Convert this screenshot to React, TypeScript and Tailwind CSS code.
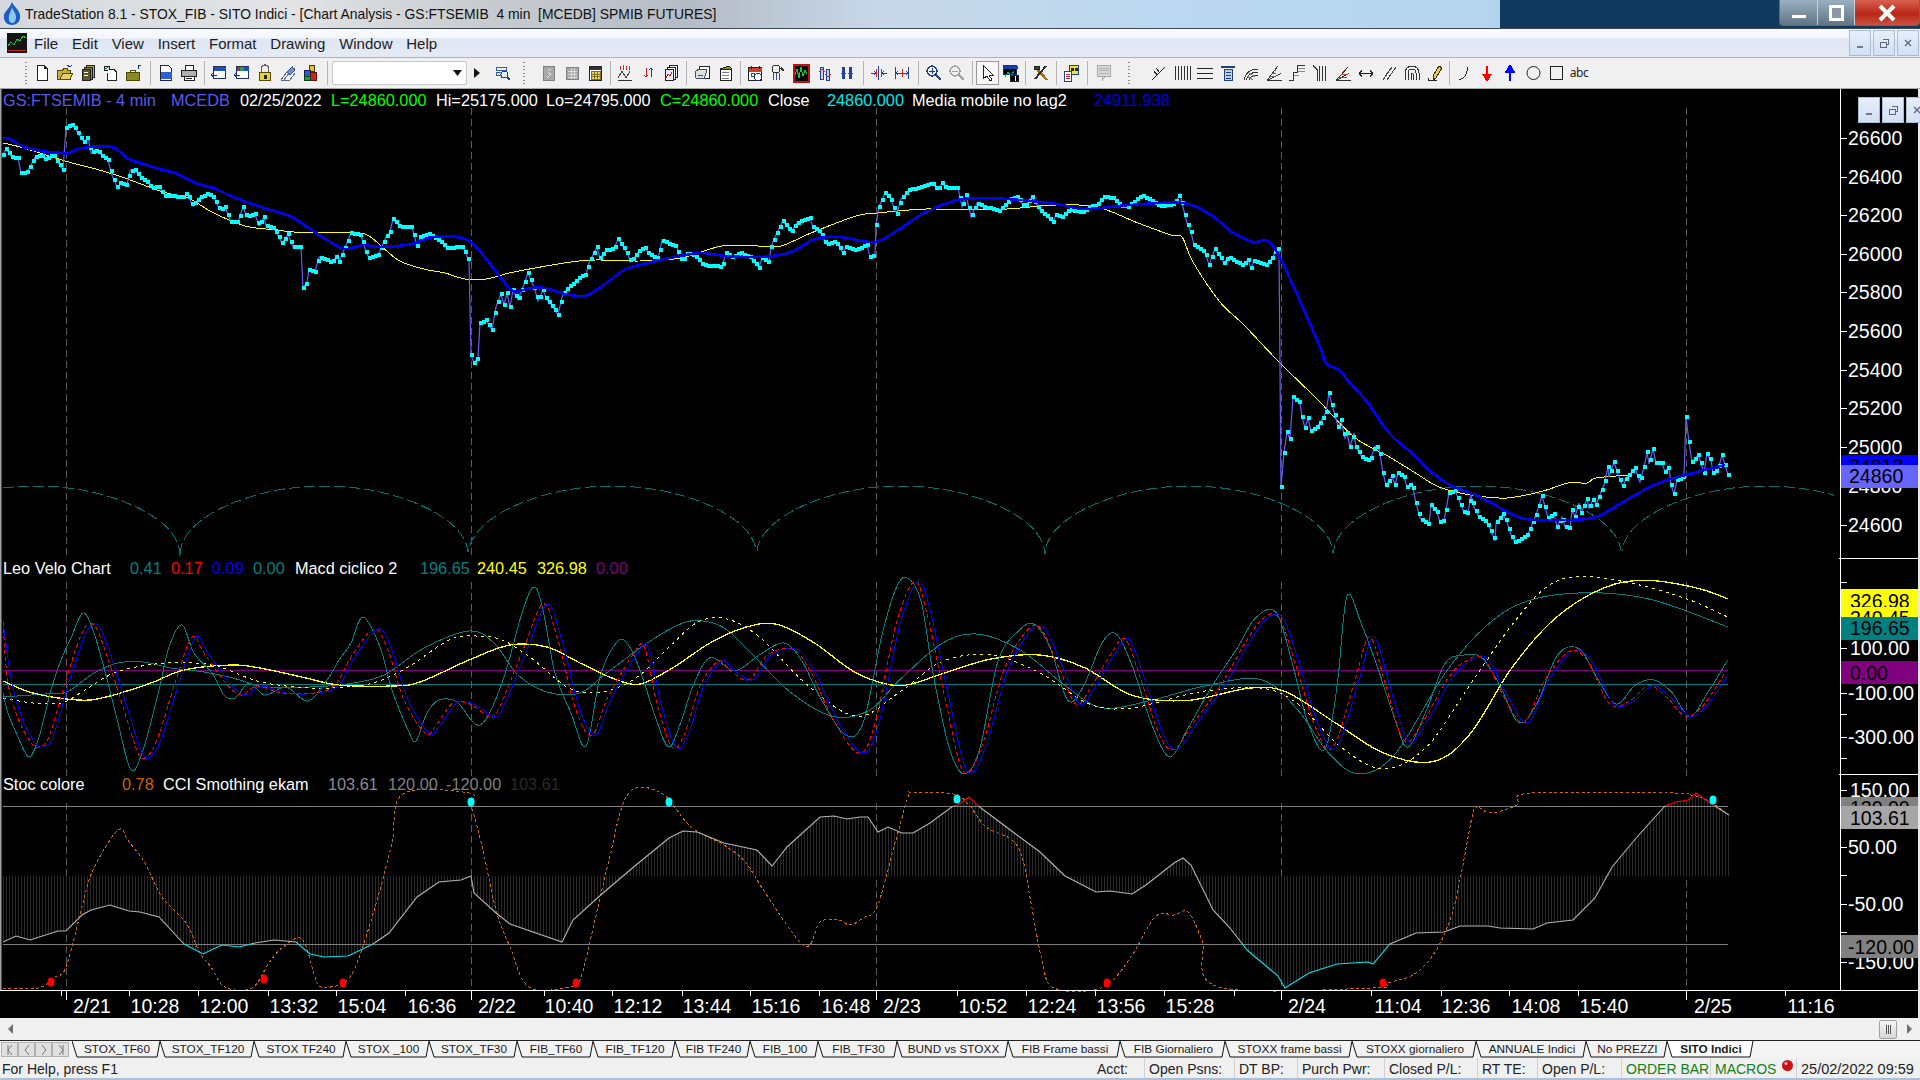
import React from 'react';

type P = [number, number];
const K = 1920 / 1568;
const th = (a: number[][]): P[] => a.map(([x, y]) => [x * K, y * K] as P);
const toD = (pts: P[]) => 'M' + pts.map(([x, y]) => `${x.toFixed(1)} ${y.toFixed(1)}`).join('L');

// catmull-rom through the points, keeps the peaks where they were read off
const curve = (pts: P[]) => {
    let d = `M${pts[0][0].toFixed(1)} ${pts[0][1].toFixed(1)}`;
    for (let i = 0; i < pts.length - 1; i++) {
        const p0 = pts[Math.max(0, i - 1)];
        const p1 = pts[i];
        const p2 = pts[i + 1];
        const p3 = pts[Math.min(pts.length - 1, i + 2)];
        const c1x = p1[0] + (p2[0] - p0[0]) / 6;
        const c1y = p1[1] + (p2[1] - p0[1]) / 6;
        const c2x = p2[0] - (p3[0] - p1[0]) / 6;
        const c2y = p2[1] - (p3[1] - p1[1]) / 6;
        d += `C${c1x.toFixed(1)} ${c1y.toFixed(1)} ${c2x.toFixed(1)} ${c2y.toFixed(1)} ${p2[0].toFixed(1)} ${p2[1].toFixed(1)}`;
    }
    return d;
};

const yAt = (pts: P[], x: number) => {
    for (let i = 1; i < pts.length; i++) {
        if (x <= pts[i][0]) {
            const [x0, y0] = pts[i - 1];
            const [x1, y1] = pts[i];
            return x1 === x0 ? y1 : y0 + ((y1 - y0) * (x - x0)) / (x1 - x0);
        }
    }
    return pts[pts.length - 1][1];
};

const price: P[] = [[3,155],[6,149],[12,157],[18,158],[21,173],[27,172],[31,165],[35,157],[41,155],[45,159],[53,155],[58,162],[63,170],[66,128],[73,124],[78,133],[84,142],[88,137],[91,153],[98,150],[102,156],[108,160],[112,175],[118,189],[120,183],[127,185],[130,171],[135,170],[141,178],[149,183],[151,188],[159,187],[165,196],[184,197],[187,193],[193,206],[200,197],[208,194],[214,198],[220,210],[225,207],[231,222],[238,222],[243,207],[247,217],[255,214],[259,226],[264,217],[266,226],[274,228],[282,243],[288,234],[293,247],[301,247],[303,288],[307,282],[309,270],[315,272],[319,257],[328,260],[331,263],[338,255],[339,262],[347,243],[351,233],[361,235],[366,252],[369,258],[378,255],[386,237],[390,232],[393,219],[400,227],[412,227],[417,246],[420,237],[429,234],[441,242],[447,248],[463,247],[469,261],[471,355],[474,363],[478,357],[480,323],[486,320],[492,330],[496,307],[501,294],[504,305],[507,293],[510,307],[513,290],[518,300],[522,290],[528,273],[535,290],[538,301],[543,290],[547,300],[553,307],[558,315],[562,297],[565,291],[580,277],[586,275],[589,263],[597,247],[600,258],[606,250],[614,249],[618,239],[627,253],[631,262],[640,250],[646,248],[648,253],[658,259],[662,240],[671,245],[677,246],[679,257],[683,260],[688,253],[697,257],[703,265],[722,267],[726,253],[732,257],[740,253],[750,257],[759,268],[762,258],[769,263],[771,247],[775,237],[783,221],[791,232],[797,223],[810,218],[813,227],[818,230],[822,235],[826,244],[836,242],[843,253],[846,247],[856,250],[867,245],[870,257],[875,255],[876,225],[879,207],[885,193],[890,198],[895,210],[897,214],[901,199],[909,190],[922,187],[932,183],[938,190],[942,183],[946,188],[958,188],[962,207],[966,195],[971,217],[977,203],[985,207],[999,211],[1011,199],[1018,197],[1024,207],[1032,197],[1040,210],[1053,222],[1056,215],[1062,217],[1069,210],[1083,212],[1089,207],[1097,205],[1104,197],[1113,198],[1120,205],[1128,207],[1142,195],[1150,200],[1162,207],[1175,203],[1180,194],[1183,207],[1187,223],[1191,232],[1194,245],[1205,252],[1209,265],[1215,249],[1224,263],[1228,257],[1242,265],[1248,260],[1251,268],[1254,261],[1266,265],[1273,257],[1276,249],[1279,249],[1281,487],[1284,453],[1287,432],[1290,439],[1293,397],[1300,403],[1302,417],[1305,428],[1308,418],[1311,431],[1317,427],[1323,418],[1326,412],[1329,393],[1332,405],[1335,415],[1338,427],[1341,420],[1345,438],[1347,433],[1350,447],[1354,433],[1356,447],[1362,457],[1370,461],[1375,446],[1379,448],[1383,473],[1386,485],[1392,476],[1395,485],[1398,473],[1404,477],[1407,487],[1412,483],[1416,503],[1420,518],[1429,525],[1431,505],[1437,512],[1440,522],[1444,521],[1449,493],[1455,490],[1461,505],[1464,512],[1468,513],[1471,495],[1474,507],[1479,517],[1486,522],[1490,528],[1495,541],[1496,523],[1503,514],[1507,522],[1511,535],[1515,542],[1521,539],[1528,534],[1536,515],[1542,496],[1546,510],[1548,518],[1554,514],[1557,527],[1562,517],[1565,527],[1570,528],[1572,510],[1575,517],[1579,503],[1581,513],[1587,499],[1589,508],[1594,498],[1596,505],[1599,497],[1604,485],[1608,467],[1609,477],[1614,462],[1620,480],[1623,486],[1627,477],[1635,468],[1640,482],[1645,463],[1647,452],[1649,464],[1653,449],[1656,463],[1662,463],[1665,472],[1669,466],[1671,485],[1674,494],[1677,480],[1682,478],[1684,475],[1686,417],[1689,442],[1692,462],[1698,455],[1701,463],[1704,473],[1707,454],[1711,460],[1713,473],[1718,470],[1722,455],[1725,465],[1728,475]];

const maBlue: P[] = [[3,138],[10,139],[24,147],[41,151],[61,153],[69,153],[82,148],[112,147],[127,158],[143,164],[163,170],[175,173],[196,183],[216,189],[233,197],[261,207],[290,216],[300,222],[327,240],[345,249],[363,245],[380,247],[412,244],[433,237],[469,241],[500,277],[513,291],[531,288],[545,288],[565,294],[584,296],[598,289],[624,270],[640,265],[660,260],[681,256],[701,253],[726,256],[762,257],[791,252],[815,239],[840,237],[875,242],[901,228],[926,212],[962,199],[1007,199],[1056,204],[1085,209],[1130,205],[1183,203],[1211,215],[1232,232],[1252,242],[1275,249],[1317,340],[1326,363],[1339,370],[1350,383],[1368,403],[1389,433],[1414,455],[1429,470],[1450,485],[1482,498],[1521,518],[1554,520],[1593,518],[1618,505],[1654,485],[1682,476],[1725,465]];

const maYellow: P[] = [[3,143],[24,148],[65,161],[92,168],[122,177],[163,192],[188,198],[212,212],[245,226],[278,230],[294,232],[351,233],[369,236],[398,260],[424,269],[445,273],[465,279],[486,279],[514,272],[571,262],[596,260],[640,261],[681,258],[722,246],[758,246],[781,246],[811,233],[856,216],[877,213],[926,209],[962,210],[1007,209],[1056,205],[1097,207],[1138,223],[1171,235],[1182,237],[1193,262],[1220,302],[1244,325],[1279,362],[1318,400],[1354,437],[1386,455],[1414,472],[1439,487],[1471,495],[1507,498],[1543,491],[1568,483],[1587,483],[1596,478],[1629,475]];

const fastTeal: P[] = [[3,693],[8,713],[18,737],[29,757],[39,737],[51,690],[61,660],[71,638],[83,613],[94,633],[108,683],[118,723],[131,770],[143,750],[159,690],[169,647],[182,625],[194,653],[212,673],[224,695],[235,698],[249,683],[265,695],[286,687],[308,701],[327,680],[339,660],[351,643],[363,617],[380,647],[392,690],[408,730],[416,741],[427,713],[439,700],[457,702],[480,725],[502,683],[522,613],[534,587],[543,610],[555,673],[571,713],[586,746],[600,677],[616,643],[627,643],[640,670],
    ...th([[535,585],[546,610],[556,590],[566,560],[580,537],[600,548],[620,535],[640,525],[655,540],[670,570],[690,600],[705,590],[720,520],[732,480],[741,472],[752,490],[762,550],[775,610],[787,632],[800,612],[815,540],[832,515],[845,510],[858,530],[872,572],[885,560],[900,525],[912,518],[925,545],[940,590],[955,618],[970,595],[990,560],[1010,530],[1025,505],[1042,500],[1055,540],[1068,590],[1082,612],[1092,560],[1100,487],[1112,510],[1125,545],[1140,590],[1150,610],[1165,580],[1180,542],[1195,535],[1210,537],[1225,560],[1240,590],[1255,575],[1272,535],[1290,530],[1305,555],[1320,575],[1335,560],[1350,555],[1365,565],[1380,585],[1395,565],[1411,539]])];

const fastBlue: P[] = [[3,622],[12,683],[24,723],[37,745],[43,747],[53,737],[69,683],[86,633],[98,625],[110,653],[127,707],[141,750],[149,758],[161,740],[180,680],[196,637],[208,653],[229,682],[245,695],[261,686],[286,693],[318,693],[339,685],[355,657],[378,629],[392,650],[408,700],[429,733],[439,727],[457,703],[476,705],[492,716],[502,710],[527,650],[547,604],[561,637],[580,710],[596,735],[612,697],[640,650],
    ...th([[530,530],[540,575],[552,610],[562,600],[575,560],[590,540],[600,548],[615,555],[630,535],[650,530],[665,548],[685,590],[705,615],[718,590],[735,510],[750,475],[760,500],[775,570],[790,630],[805,610],[822,550],[838,520],[852,512],[868,545],[882,575],[895,560],[910,535],[922,522],[935,555],[950,600],[962,612],[978,590],[1000,560],[1020,525],[1035,505],[1048,505],[1062,545],[1078,595],[1092,610],[1110,555],[1122,520],[1135,560],[1150,605],[1165,590],[1185,555],[1200,540],[1215,538],[1232,570],[1248,590],[1265,555],[1285,532],[1300,540],[1318,575],[1335,572],[1350,560],[1365,570],[1380,585],[1395,575],[1411,551]])];
const fastRed: P[] = fastBlue.map(([x, y]) => [Math.max(3, x - 4), y] as P);

const slowTeal: P[] = [[3,697],[45,694],[67,692],[94,673],[118,663],[143,662],[171,668],[204,672],[233,678],[265,687],[310,687],[347,684],[384,675],[424,648],[469,631],[494,643],[518,675],[547,692],[580,693],[604,675],[640,648],
    ...th([[545,515],[565,507],[590,512],[615,535],[645,565],[680,585],[710,580],[735,555],[770,525],[800,518],[835,532],[870,560],[900,578],[940,572],[985,560],[1030,555],[1060,580],[1085,615],[1110,632],[1140,615],[1180,550],[1215,510],[1250,490],[1300,484],[1350,490],[1411,512]])];
const slowDash: P[] = [[3,698],[33,703],[61,703],[82,692],[114,673],[155,664],[192,663],[220,667],[261,682],[310,688],[347,687],[376,682],[408,667],[449,640],[476,636],[502,640],[531,658],[567,687],[592,693],[616,688],[640,675],
    ...th([[550,525],[570,508],[592,505],[620,520],[660,560],[700,585],[735,565],[770,540],[810,535],[850,550],[890,575],[925,578],[980,565],[1030,562],[1060,575],[1095,610],[1130,628],[1165,610],[1200,560],[1235,510],[1265,478],[1295,471],[1340,478],[1380,490],[1411,504]])];
const slowYellow: P[] = [[3,681],[33,693],[78,700],[106,697],[151,683],[184,670],[233,665],[265,669],[306,678],[339,685],[392,686],[420,682],[469,660],[510,645],[547,647],[580,663],[612,678],[640,684],
    ...th([[550,545],[580,525],[610,512],[635,510],[665,525],[700,550],[735,560],[770,550],[810,538],[850,535],[885,545],[925,568],[970,572],[1020,562],[1050,565],[1090,590],[1130,615],[1170,622],[1200,600],[1235,545],[1270,505],[1310,480],[1345,474],[1385,480],[1411,489]])];

const cci: P[] = [[3,942],[16,936],[30,940],[58,931],[66,931],[82,915],[91,910],[110,905],[129,911],[140,912],[159,917],[184,944],[203,954],[222,945],[239,947],[255,943],[274,940],[296,942],[310,954],[324,957],[348,956],[373,944],[389,933],[417,897],[439,882],[461,880],[471,876],[474,893],[496,913],[510,924],[562,942],[573,920],[603,893],[636,865],[669,838],[683,831],[697,832],[724,843],[757,850],[772,866],[787,847],[820,817],[834,816],[847,819],[860,817],[868,817],[878,832],[888,827],[902,833],[913,833],[930,823],[953,806],[958,805],[969,797],[981,808],[1017,835],[1040,852],[1065,876],[1096,892],[1110,891],[1132,894],[1146,885],[1174,863],[1183,858],[1191,865],[1213,910],[1230,928],[1247,950],[1278,976],[1285,988],[1309,973],[1337,964],[1368,962],[1373,964],[1390,944],[1416,933],[1444,932],[1460,926],[1488,926],[1500,928],[1533,929],[1547,923],[1573,920],[1595,898],[1612,867],[1637,837],[1665,806],[1676,802],[1688,800],[1696,793],[1710,803],[1729,815]];

const stoc: P[] = [[3,988],[38,988],[55,977],[66,967],[82,907],[93,870],[118,830],[129,842],[145,863],[162,897],[186,923],[200,953],[211,967],[225,987],[252,988],[269,963],[282,948],[302,939],[315,977],[321,987],[343,983],[357,963],[378,897],[392,843],[403,794],[469,793],[472,807],[483,850],[496,910],[510,947],[529,987],[570,987],[581,977],[595,920],[609,860],[628,794],[661,793],[691,827],[724,845],[746,863],[768,897],[805,946],[820,922],[839,920],[850,925],[863,918],[877,907],[894,847],[908,797],[913,793],[953,794],[969,805],[986,827],[1012,840],[1023,860],[1031,903],[1042,960],[1054,988],[1101,988],[1129,960],[1155,917],[1174,915],[1188,912],[1202,940],[1219,987],[1373,988],[1388,983],[1416,973],[1438,947],[1455,903],[1472,817],[1477,807],[1491,813],[1517,805],[1531,793],[1674,793],[1691,795],[1707,800],[1729,815]];

const squares = () => {
    let d = '';
    for (let x = 3; x <= 1728; x += 3) {
        const y = Math.round(yAt(price, x));
        d += `M${x - 1} ${y - 2}h4v4h-4z`;
    }
    return d;
};

const hist = () => {
    let d = '';
    for (let x = 3; x <= 1728; x += 3) d += `M${x} 876V${yAt(cci, x).toFixed(0)}`;
    return d;
};

const cycle = () => {
    const pts: P[] = [];
    for (let x = 3; x <= 1834; x += 1) {
        const s = Math.abs(Math.sin((Math.PI * (x - 180)) / 288.3));
        pts.push([x, 557 - 71 * Math.pow(s, 0.45)]);
    }
    return toD(pts);
};

const days = [66, 471, 876, 1281, 1686];
const timeLabels: [string, number][] = [['2/21',92],['10:28',155],['12:00',224],['13:32',294],['15:04',362],['16:36',432],['2/22',497],['10:40',569],['12:12',638],['13:44',707],['15:16',776],['16:48',846],['2/23',902],['10:52',983],['12:24',1052],['13:56',1121],['15:28',1190],['2/24',1307],['11:04',1398],['12:36',1466],['14:08',1536],['15:40',1604],['2/25',1713],['11:16',1811]];
const timeTicks = [61,129,198,268,336,405,544,612,682,750,819,957,1026,1095,1164,1234,1371,1441,1509,1578,1785];
const priceLabels: [string, number][] = [['26600',138],['26400',177],['26200',215],['26000',254],['25800',292],['25600',331],['25400',370],['25200',408],['25000',447],['24800',486],['24600',525]];
const axisLabels: [string, number, number][] = [['100.00',1850,648],['-100.00',1848,693],['-300.00',1848,737],['150.00',1850,790],['50.00',1848,847],['-50.00',1848,904],['-150.00',1848,962]];
const axisTicks = [582,648,693,714,737,758,790,847,875,904,932,962];

const legends: [string, number, number, string][] = [
    ['GS:FTSEMIB - 4 min',3,100,'#5a5af0'],['MCEDB',171,100,'#5a5af0'],['02/25/2022',240,100,'#fff'],['L=24860.000',331,100,'#00ff00'],['Hi=25175.000',436,100,'#fff'],['Lo=24795.000',546,100,'#fff'],['C=24860.000',660,100,'#00ff00'],['Close',768,100,'#fff'],['24860.000',827,100,'#00e8f0'],['Media mobile no lag2',912,100,'#fff'],['24911.938',1094,100,'#0000e0'],
    ['Leo Velo Chart',3,568,'#fff'],['0.41',130,568,'#008080'],['0.17',171,568,'#ff0000'],['0.09',212,568,'#0000ff'],['0.00',253,568,'#008080'],['Macd ciclico 2',295,568,'#fff'],['196.65',420,568,'#008080'],['240.45',477,568,'#ffff00'],['326.98',537,568,'#ffff00'],['0.00',596,568,'#800080'],
    ['Stoc colore',3,784,'#fff'],['0.78',122,784,'#c86400'],['CCI Smothing ekam',163,784,'#fff'],['103.61',328,784,'#8a8a9a'],['120.00',388,784,'#808080'],['-120.00',446,784,'#808080'],['103.61',510,784,'#2a2a2a'],
];

const redDots: P[] = [[51,982],[264,979],[343,983],[576,983],[1107,983],[1383,983]];
const cyanDots: P[] = [[471,802],[669,802],[957,799],[1713,800]];

const ChartPlot = () => (
    <svg width={1920} height={929} viewBox="0 89 1920 929" className="block font-['Liberation_Sans',Arial,sans-serif]">
        <rect x={0} y={89} width={1920} height={929} fill="#000" />
        <rect x={0} y={89} width={1.5} height={902} fill="#a0a0a0" />
        <rect x={1918} y={89} width={2} height={929} fill="#e8e8e8" />

        <g stroke="#5a5a5a" strokeWidth={1} strokeDasharray="7 4" shapeRendering="crispEdges">
            {days.map((x) => (
                <path key={x} d={`M${x} 108V556M${x} 582V776M${x} 803V987`} />
            ))}
        </g>

        <path d={cycle()} fill="none" stroke="#007070" strokeWidth={1} strokeDasharray="11 4" shapeRendering="crispEdges" />
        <path d={curve(maYellow)} fill="none" stroke="#ffff00" strokeWidth={1} shapeRendering="crispEdges" />
        <path d={toD(price)} fill="none" stroke="#6a5cf5" strokeWidth={1.2} />
        <path d={squares()} fill="#00ffff" shapeRendering="crispEdges" />
        <path d={curve(maBlue)} fill="none" stroke="#0000ff" strokeWidth={2.6} shapeRendering="crispEdges" />

        <g fill="none" strokeWidth={1} shapeRendering="crispEdges">
            <path d="M3 670.5H1728" stroke="#800080" />
            <path d="M3 684.5H1728" stroke="#008080" />
            <path d={curve(slowTeal)} stroke="#008080" />
            <path d={curve(slowDash)} stroke="#ffff00" strokeDasharray="3 4" />
            <path d={curve(slowYellow)} stroke="#ffff00" strokeWidth={1.3} />
            <path d={curve(fastTeal)} stroke="#008080" />
            <path d={curve(fastBlue)} stroke="#0000ff" />
            <path d={curve(fastRed)} stroke="#ff0000" strokeDasharray="4 3" />
        </g>

        <path d={hist()} stroke="#2a2a2a" strokeWidth={1} shapeRendering="crispEdges" />
        <path d="M3 806.5H1728M3 944.5H1728" stroke="#808080" strokeWidth={1} shapeRendering="crispEdges" />
        <path d={curve(stoc)} fill="none" stroke="#d06a00" strokeWidth={1} strokeDasharray="3 2.5" shapeRendering="crispEdges" />
        <clipPath id="ccihi"><rect x={0} y={780} width={1740} height={26} /></clipPath>
        <clipPath id="ccimid"><rect x={0} y={806} width={1740} height={138} /></clipPath>
        <clipPath id="ccilo"><rect x={0} y={944} width={1740} height={50} /></clipPath>
        <path d={toD(cci)} fill="none" stroke="#b4b4b4" strokeWidth={1.1} clipPath="url(#ccimid)" />
        <path d={toD(cci)} fill="none" stroke="#ff0000" strokeWidth={1.1} clipPath="url(#ccihi)" />
        <path d={toD(cci)} fill="none" stroke="#00e5ee" strokeWidth={1.1} clipPath="url(#ccilo)" />
        {redDots.map(([x, y]) => <ellipse key={x} cx={x} cy={y} rx={3.5} ry={4.5} fill="#ff0000" />)}
        {cyanDots.map(([x, y]) => <ellipse key={x} cx={x} cy={y} rx={3.5} ry={4.5} fill="#00ffff" />)}

        {legends.map(([t, x, y, c]) => (
            <text key={t + x} x={x} y={y + 6} fontSize={16.3} fill={c}>{t}</text>
        ))}

        <rect x={1840} y={89} width={1} height={902} fill="#fff" />
        <rect x={0} y={990} width={1918} height={1} fill="#fff" />
        <rect x={1839} y={558} width={79} height={1} fill="#fff" />
        <rect x={1839} y={774} width={79} height={1} fill="#fff" />
        {[...priceLabels.map((p) => p[1]), ...axisTicks].map((y) => (
            <rect key={y} x={1841} y={y} width={6} height={1} fill="#fff" />
        ))}
        {priceLabels.map(([t, y]) => (
            <text key={t} x={1848} y={y + 7} fontSize={19.5} fill="#fff">{t}</text>
        ))}
        {axisLabels.map(([t, x, y]) => (
            <text key={t} x={x} y={y + 7} fontSize={19.5} fill="#fff">{t}</text>
        ))}

        <rect x={1841} y={455} width={77} height={23} fill="#0000ff" />
        <text x={1849} y={473} fontSize={19.5} fill="#000">24912</text>
        <rect x={1841} y={465} width={77} height={23} fill="#6666ff" />
        <text x={1849} y={483} fontSize={19.5} fill="#000">24860</text>

        <rect x={1841} y={589} width={77} height={23} fill="#ffff00" />
        <text x={1850} y={608} fontSize={19.5} fill="#000">326.98</text>
        <rect x={1841} y={607} width={77} height={10} fill="#ffff00" />
        <text x={1850} y={625} fontSize={19.5} fill="#000">240.45</text>
        <rect x={1841} y={617} width={77} height={23} fill="#008080" />
        <text x={1850} y={635} fontSize={19.5} fill="#000">196.65</text>
        <rect x={1841} y={661} width={77} height={23} fill="#800080" />
        <text x={1850} y={680} fontSize={19.5} fill="#000">0.00</text>
        <rect x={1841} y={797} width={77} height={23} fill="#808080" />
        <text x={1850} y={815} fontSize={19.5} fill="#000">120.00</text>
        <rect x={1841} y={806} width={77} height={23} fill="#a6a6a6" />
        <text x={1850} y={825} fontSize={19.5} fill="#000">103.61</text>
        <rect x={1841} y={935} width={77} height={23} fill="#808080" />
        <text x={1848} y={954} fontSize={19.5} fill="#000">-120.00</text>

        {timeTicks.map((x) => <rect key={x} x={x} y={991} width={1} height={5} fill="#fff" />)}
        {days.map((x) => <rect key={x} x={x} y={991} width={1} height={9} fill="#fff" />)}
        {timeLabels.map(([t, x]) => (
            <text key={t} x={x} y={1013} fontSize={19.5} fill="#fff" textAnchor="middle">{t}</text>
        ))}
    </svg>
);

const Ico = ({ children }: { children: React.ReactNode }) => (
    <svg width={20} height={20} viewBox="0 0 20 20" fill="none" stroke="#222" strokeWidth={1} shapeRendering="crispEdges">
        {children}
    </svg>
);

const Btn = ({ children, pressed }: { children: React.ReactNode; pressed?: boolean }) => (
    <div className={`w-[23px] h-[24px] flex items-center justify-center ${pressed ? 'border border-[#9a9a9a] bg-[#f8f8f8]' : ''}`}>
        <Ico>{children}</Ico>
    </div>
);

const Sep = ({ w }: { w: string }) => (
    <div className={`${w} h-[24px] flex justify-center`}>
        <div className="w-px h-full bg-[#b4b4b4]" />
    </div>
);

const Grip = () => (
    <div className="w-[6px] h-[24px] flex flex-col justify-between items-center py-[1px]">
        {[0, 1, 2, 3, 4, 5, 6].map((i) => <div key={i} className="w-[2px] h-[1px] bg-[#8a8a8a]" />)}
    </div>
);

const Toolbar = () => (
    <div className="h-[31px] bg-[#f0f0f0] flex items-center border-b border-[#a8a8a8] pl-[23px]">
        <Grip />
        <div className="w-[1.5px]" />
        <Btn><path d="M5 2.5h7l3 3v12H5z" fill="#fff" /><path d="M12 2.5v3h3" /></Btn>
        <Btn><path d="M2.5 7.5h5l1-2h4v2h3v9h-13z" fill="#c8b040" stroke="#5a4a00" /><path d="M5 16l3-6h10l-3 6z" fill="#e8d060" stroke="#5a4a00" /><path d="M12 2l3 2 2-2" stroke="#0033aa" /></Btn>
        <Btn><path d="M8 2.5h8v12H8z" fill="#b0a860" /><path d="M6 4.5h8v12H6z" fill="#8a8440" /><path d="M4 6.5h8v11H4z" fill="#5a5a20" /><path d="M6 9h4M6 12h4" stroke="#fff" /></Btn>
        <Btn><path d="M3 3.5h5v4H3z" fill="#dde" /><path d="M8 6.5h5l2 2v9H6v-8" fill="#fff" /><path d="M4 5l1 1 2-2" stroke="#00884a" /></Btn>
        <Btn><path d="M2.5 9.5h13v8h-13z" fill="#8a8a20" stroke="#4a4a00" /><path d="M6 9.5V7h5v2.5" stroke="#4a4a00" /><path d="M14 6V2.5h3" stroke="#0033aa" /></Btn>
        <Sep w="w-[9px]" />
        <Btn><path d="M4.5 2.5h8l3 3v12h-11z" fill="#fff" stroke="#224" /><path d="M5 9h10v6H5z" fill="#3060d0" stroke="#3060d0" /></Btn>
        <Btn><path d="M6 2.5h8v5H6z" fill="#fff" /><path d="M2.5 7.5h15v6h-15z" fill="#b0b0b0" /><path d="M5 13.5h10v4H5z" fill="#fff" /><path d="M7 15h6" /></Btn>
        <Sep w="w-[7px]" />
        <Btn><path d="M4.5 3.5h12v12h-12z" fill="#fff" stroke="#203060" /><path d="M5 4h11v3H5z" fill="#2050b0" stroke="#2050b0" /><path d="M2 12h6M2 12l3-3M2 12l3 3" stroke="#0033aa" /></Btn>
        <Btn><path d="M4.5 3.5h12v12h-12z" fill="#fff" stroke="#203060" /><path d="M5 4h3v3H5z" fill="#d02020" stroke="#d02020" /><path d="M8 4h4v3H8z" fill="#20a040" stroke="#20a040" /><path d="M12 4h4v3h-4z" fill="#2050b0" stroke="#2050b0" /><path d="M2 12h6M2 12l3-3M2 12l3 3" stroke="#0033aa" /></Btn>
        <Btn><path d="M6.5 9V5.5a3.5 3.5 0 0 1 7 0V9" stroke="#606060" strokeWidth={1.5} /><path d="M4.5 9.5h11v8h-11z" fill="#e8d040" stroke="#5a4a00" /><path d="M9 12h2v3H9z" fill="#222" /></Btn>
        <Btn><path d="M3 17l5-7 7-7M6 17l5-7 6-5M3 17h9l5-7" stroke="#5a6a80" /><path d="M9 9l5-5 3 3-5 5z" fill="#8090c0" stroke="#3050a0" /></Btn>
        <Btn><path d="M8 2.5h5v6H8z" fill="#e8c020" stroke="#404000" /><path d="M3 7.5h6v6H3z" fill="#2060d0" stroke="#102060" /><path d="M9 9.5h6v8H9z" fill="#d02020" stroke="#601010" /><path d="M3 13.5h6v4H3z" fill="#20a040" stroke="#104010" /></Btn>
        <Sep w="w-[9px]" />
        <div className="w-[135px] h-[24px] bg-white border border-[#c8c8c8] rounded-[2px] flex items-center justify-end pr-[4px]">
            <svg width={9} height={6} viewBox="0 0 9 6"><path d="M0 0h9L4.5 6z" fill="#111" /></svg>
        </div>
        <div className="w-[20px] flex justify-center">
            <svg width={6} height={10} viewBox="0 0 6 10"><path d="M0 0l6 5-6 5z" fill="#111" /></svg>
        </div>
        <div className="w-[5px]" />
        <Btn><path d="M3 4.5h10v3H3zM3 9.5h6v3H3z" stroke="#3060a0" /><circle cx={11.5} cy={11.5} r={3.5} fill="#dfeffa" stroke="#204080" /><path d="M14 14l3 3" stroke="#204080" strokeWidth={2} /></Btn>
        <div className="w-[18px] flex justify-center"><Grip /></div>
        <div className="w-[5px]" />
        <Btn><path d="M4.5 3.5h11v14h-11z" fill="#a8a8a8" stroke="#808080" /><path d="M12 6c-4 1-4 4 0 5-2 2-3 3-4 4" stroke="#e8e8e8" /></Btn>
        <Btn><path d="M4.5 4.5h12v12h-12z" fill="#a8a8a8" stroke="#808080" /><path d="M6 8h9M6 11h9M6 14h9M9 5v11M12 5v11" stroke="#dcdcdc" /></Btn>
        <Btn><path d="M4.5 3.5h12v14h-12z" fill="#fff" /><path d="M5 4h11v2H5z" fill="#333" stroke="#333" /><path d="M6 8h9v8H6z" fill="#e8d860" stroke="#807020" /><path d="M6 11h9M6 13.5h9M9 8v8M12 8v8" stroke="#807020" /></Btn>
        <Sep w="w-[7px]" />
        <Btn><path d="M3 15l4-7 4 7 4-7" stroke="#444" /><path d="M3 17.5h14" stroke="#333" /><path d="M5 3v4M8 2v5M11 3v4M14 3v4" stroke="#d03020" /></Btn>
        <Btn><path d="M8 5v9M6 12l2 2 2-2" stroke="#c02020" /><path d="M13 14V5M11 7l2-2 2 2" stroke="#1040a0" /></Btn>
        <Btn><path d="M8 2.5h8v12H8z" fill="#fff" /><path d="M6 4.5h8v12H6z" fill="#fff" /><path d="M4 6.5h8v11H4z" fill="#e8eeff" /><path d="M5 15l2-4 2 2 2-4" stroke="#c02020" /></Btn>
        <Sep w="w-[8px]" />
        <Btn><path d="M7 3.5h10v12H7z" fill="#fff" /><path d="M3 9l4-3 8 1-3 9-8-1z" fill="#e0e0e0" stroke="#405060" /><path d="M6 12h5" stroke="#2050b0" /></Btn>
        <Btn><path d="M5 6.5h11v11H5z" fill="#fff" /><path d="M5 6l9-3 3 3" stroke="#222" fill="#8a8a20" /><path d="M7 9h7M7 12h7M7 15h7" stroke="#808080" /></Btn>
        <Sep w="w-[7px]" />
        <Btn><path d="M3.5 4.5h13v13h-13z" fill="#fff" /><path d="M4 5h12v3H4z" fill="#d04030" stroke="#d04030" /><path d="M6 2.5v3M14 2.5v3" /><path d="M6 10h3v3H6zM11 10h3v3h-3z" stroke="#207040" /><circle cx={13} cy={14} r={3.5} fill="#fff" stroke="#203060" /></Btn>
        <Btn><circle cx={8} cy={6} r={4} fill="#eee" stroke="#333" /><path d="M5 10v7M8 10v7M11 10v7" stroke="#3050a0" /><path d="M13 5l3 3" stroke="#333" strokeWidth={2} /></Btn>
        <Btn><path d="M2.5 1.5h15v17h-15z" fill="#000" stroke="#c01010" strokeWidth={2} /><path d="M4 12l2-6 2 9 2-11 2 9 2-6 2 4" stroke="#00d040" /></Btn>
        <Btn><path d="M6 16V4h3v12zM12 17V6h3v11z" fill="#c8d0f0" stroke="#2040a0" /><path d="M5 9l3-3 3 3M11 11l3 3 3-3" stroke="#c02020" /></Btn>
        <Btn><path d="M6.5 4v12M13.5 4v12" stroke="#2040a0" strokeWidth={2.5} /><path d="M4 10h5M11 10h5" stroke="#c02020" /></Btn>
        <Sep w="w-[9px]" />
        <Btn><path d="M9.5 3v14" stroke="#2040a0" /><path d="M2 10h5M12 10h6M5 8l2 2-2 2M15 8l-2 2 2 2" stroke="#2040a0" /><path d="M7 6v8M12 6v8" stroke="#c02020" /></Btn>
        <Btn><path d="M3.5 4v12M16.5 4v12" stroke="#2040a0" /><path d="M4 10h12M6 8l-2 2 2 2M14 8l2 2-2 2" stroke="#2040a0" /><path d="M10 6v8" stroke="#c02020" /></Btn>
        <Sep w="w-[9px]" />
        <Btn><circle cx={8} cy={8} r={5} fill="#e8f4ff" stroke="#204080" strokeWidth={1.5} /><path d="M8 5v6M5 8h6" stroke="#204080" /><path d="M12 12l5 5" stroke="#204080" strokeWidth={2.5} /></Btn>
        <Btn><circle cx={8} cy={8} r={5} fill="#f0f0f0" stroke="#a0a0a0" strokeWidth={1.5} /><path d="M5 8h6" stroke="#a0a0a0" /><path d="M12 12l5 5" stroke="#a0a0a0" strokeWidth={2.5} /></Btn>
        <Sep w="w-[7px]" />
        <Btn pressed><path d="M6 2v14l4-3 3 5 2-1-3-5h4z" fill="#fff" stroke="#222" /></Btn>
        <Btn><path d="M3.5 2.5h13v9h-13z" fill="#000" stroke="#103080" /><path d="M3 3h14v2H3z" fill="#1040b0" stroke="#1040b0" /><path d="M5 14l3-5 3 4 3-5" stroke="#00c040" /><path d="M10 12h8v6h-8z" fill="#000" /><path d="M15 13v5" stroke="#fff" /></Btn>
        <Sep w="w-[8px]" />
        <Btn><path d="M4 4l12 13" stroke="#a07010" strokeWidth={2.5} /><path d="M15 3L4 16" stroke="#303030" strokeWidth={2} /><path d="M3 3h5v3H3z" fill="#404040" /></Btn>
        <Sep w="w-[7px]" />
        <Btn><path d="M8.5 2.5h9v9h-9z" fill="#f0e040" stroke="#204080" /><path d="M10 5h2v2h-2zM14 5h2v2h-2z" fill="#204080" /><path d="M3.5 8.5h7v10h-7z" fill="#fff" stroke="#204080" /><path d="M5 11h4M5 13h4M5 15h4" stroke="#c02020" /></Btn>
        <Sep w="w-[10px]" />
        <Btn><path d="M3.5 2.5h13v11h-13z" fill="#d8d8d8" stroke="#a8a8a8" /><path d="M5 5h10M5 7.5h10M5 10h10" stroke="#b0b0b0" /><path d="M8 13.5v4l3-4" stroke="#a8a8a8" /></Btn>
        <div className="w-[26px] flex justify-center"><Grip /></div>
        <div className="w-[6px]" />
        <Btn><path d="M3 17L16 4M5 8l3 4M7 5l4 5" stroke="#222" /></Btn>
        <Btn><path d="M3.5 3v14M6.5 3v14M9.5 3v14M12.5 3v14M15.5 3v14M18.5 3v14" stroke="#333" /></Btn>
        <Btn><path d="M2 5.5h16M2 10.5h16M2 15.5h16" stroke="#222" strokeWidth={1.5} /></Btn>
        <Btn><path d="M3 3.5h14" stroke="#204070" strokeWidth={2} /><path d="M6.5 6.5h8v11h-8z" fill="#b8d0e8" stroke="#204070" /><path d="M8 9h5M8 12h5M8 15h5" stroke="#204070" /></Btn>
        <Btn><path d="M3 17C5 9 11 6 17 6M5 17C7 11 12 9 17 9M8 17c1-3 5-5 9-5" stroke="#333" /><path d="M6 13l6 4M8 10l6 4" stroke="#888" /></Btn>
        <Btn><path d="M3 17.5h15M3 17.5L14 3M3 17.5l14-7" stroke="#333" /><path d="M6 13h6M8 10h4M10 7h2" stroke="#666" /></Btn>
        <Btn><path d="M2 17.5h4v-8h4V2.5h8" stroke="#333" /><path d="M11 5h7M11 8h7M7 12h5" stroke="#888" /></Btn>
        <Btn><path d="M3 2.5l4 4v11M9 2.5v15M12 2.5v15M15 2.5v15" stroke="#333" /></Btn>
        <Btn><path d="M3 17.5h15M3 17.5L15 4M3 17.5l13-7M3 17.5l9 0" stroke="#333" /><path d="M6 14h8M8 11h7" stroke="#c04030" /></Btn>
        <Btn><path d="M3 10.5h14M3 10.5l3-3M3 10.5l3 3M17 10.5l-3-3M17 10.5l-3 3" stroke="#222" strokeWidth={1.2} /></Btn>
        <Btn><path d="M4 17L13 4M8 17l9-13M6 13l7-9" stroke="#444" /></Btn>
        <Btn><path d="M3 17V10a7 7 0 0 1 14 0v7M6 17v-7a4 4 0 0 1 8 0v7M9 17v-6a1 1 0 0 1 2 0v6" stroke="#333" /></Btn>
        <Btn><path d="M3 17.5h9M3 17.5v-3" stroke="#222" /><path d="M8 13L14 3l3 2-6 10-3 2z" fill="#e8d040" stroke="#333" /></Btn>
        <Sep w="w-[6px]" />
        <Btn><path d="M5 17c5-1 8-6 9-13" stroke="#222" /></Btn>
        <Btn><path d="M10 3v9" stroke="#ff0000" strokeWidth={2.5} /><path d="M5.5 11h9L10 18z" fill="#ff0000" stroke="#ff0000" /></Btn>
        <Btn><path d="M10 18V8" stroke="#0000ff" strokeWidth={2.5} /><path d="M5.5 9h9L10 2z" fill="#0000ff" stroke="#0000ff" /></Btn>
        <svg width={23} height={20} viewBox="0 0 23 20" fill="none"><circle cx={11.5} cy={10} r={6.5} stroke="#222" /></svg>
        <svg width={23} height={20} viewBox="0 0 23 20" fill="none" shapeRendering="crispEdges"><path d="M5.5 3.5h12v13h-12z" stroke="#222" /></svg>
        <span className="w-[23px] text-center text-[12px] leading-none text-[#222] tracking-[-0.5px]">abc</span>
    </div>
);

const MdiBtns = ({ cls }: { cls: string }) => (
    <div className={`flex gap-[2px] ${cls}`}>
        <div className="w-[22px] h-full bg-[linear-gradient(#e6eefa,#d2e0f4)] border border-[#a8bcd4] flex items-center justify-center pt-[8px]">
            <div className="w-[6px] h-[2px] bg-[#707890]" />
        </div>
        <div className="w-[22px] h-full bg-[linear-gradient(#e6eefa,#d2e0f4)] border border-[#a8bcd4] flex items-center justify-center">
            <svg width={9} height={9} viewBox="0 0 9 9" fill="none" stroke="#606880" shapeRendering="crispEdges"><path d="M2.5.5h6v5h-2M.5 3.5h6v5h-6z" /></svg>
        </div>
        <div className="w-[22px] h-full bg-[linear-gradient(#e6eefa,#d2e0f4)] border border-[#a8bcd4] flex items-center justify-center">
            <svg width={8} height={8} viewBox="0 0 8 8" stroke="#606880" strokeWidth={1.4}><path d="M1 1l6 6M7 1L1 7" /></svg>
        </div>
    </div>
);

const TitleBar = () => (
    <div className="h-[29px] flex border-b border-[#3a4654] bg-[linear-gradient(90deg,#d4d8dd_0%,#e2e4e6_15%,#c8ccd0_25%,#b4bcc6_36%,#c8d8e8_46%,#bcd8f0_60%,#b4d4ee_78%,#aed0ec_100%)]">
        <svg width={18} height={24} viewBox="0 0 18 24" className="ml-[3px] mt-[2px]">
            <path d="M9 0c2 5 7 7 8 13 1 6-3 10-8 10-5 0-9-4-8-10C2 9 6 7 9 0z" fill="#1c5cc4" />
            <path d="M9 5c1 4 4 6 4 10 0 4-2 6-4 6-2 0-4-3-3-7 .5-3 2-5 3-9z" fill="#8fc8f4" />
        </svg>
        <span className="ml-[4px] text-[13.9px] leading-[29px] text-[#111] whitespace-pre font-['Liberation_Sans',Arial,sans-serif]">
            TradeStation 8.1 - STOX_FIB - SITO Indici - [Chart Analysis - GS:FTSEMIB  4 min  [MCEDB] SPMIB FUTURES]
        </span>
        <div className="ml-auto w-[420px] h-full bg-[#0f3a5e] flex justify-end">
            <div className="flex h-[26px] mr-0 rounded-b-[4px] overflow-hidden border border-t-0 border-[#5a6a7a]">
                <div className="w-[38px] bg-[linear-gradient(#9ab0c0,#607484)] flex items-end justify-center pb-[6px] border-r border-[#c8d0d8]">
                    <div className="w-[16px] h-[5px] bg-white border border-[#808890]" />
                </div>
                <div className="w-[37px] bg-[linear-gradient(#9ab0c0,#607484)] flex items-center justify-center border-r border-[#c8d0d8]">
                    <div className="w-[15px] h-[16px] border-[3px] border-white bg-[#8898a8]" />
                </div>
                <div className="w-[64px] bg-[linear-gradient(#d86050,#b82818_55%,#c85040)] flex items-center justify-center">
                    <svg width={20} height={18} viewBox="0 0 20 18" stroke="#fff" strokeWidth={4}><path d="M3 2l14 14M17 2L3 16" /></svg>
                </div>
            </div>
        </div>
    </div>
);

const menus = ['File', 'Edit', 'View', 'Insert', 'Format', 'Drawing', 'Window', 'Help'];

const MenuBar = () => (
    <div className="h-[29px] flex items-center border-b border-[#a8b4c4] bg-[linear-gradient(#f8fafc_0%,#f4f6fa_30%,#dfe6f3_38%,#e4eaf5_100%)]">
        <svg width={20} height={20} viewBox="0 0 20 20" className="ml-[7px]" shapeRendering="crispEdges">
            <rect width={20} height={20} fill="#141414" />
            <path d="M1 13l3-4 3 3 3-6 3 2 3-5 3 2" fill="none" stroke="#20c040" />
            <path d="M1 17h18" stroke="#c03020" />
        </svg>
        <div className="ml-[7px] pt-[2px] flex gap-[13.8px] text-[15px] text-[#1c1c1c] font-['Liberation_Sans',Arial,sans-serif]">
            {menus.map((m) => <span key={m}>{m}</span>)}
        </div>
        <MdiBtns cls="ml-auto h-[26px] mr-px" />
    </div>
);

const tabs: { label: string; w: number; cls: string; active?: boolean }[] = [
    { label: 'STOX_TF60', w: 88, cls: 'w-[88px]' },
    { label: 'STOX_TF120', w: 94, cls: 'w-[94px]' },
    { label: 'STOX TF240', w: 92, cls: 'w-[92px]' },
    { label: 'STOX _100', w: 83, cls: 'w-[83px]' },
    { label: 'STOX_TF30', w: 88, cls: 'w-[88px]' },
    { label: 'FIB_TF60', w: 76, cls: 'w-[76px]' },
    { label: 'FIB_TF120', w: 82, cls: 'w-[82px]' },
    { label: 'FIB TF240', w: 75, cls: 'w-[75px]' },
    { label: 'FIB_100', w: 68, cls: 'w-[68px]' },
    { label: 'FIB_TF30', w: 79, cls: 'w-[79px]' },
    { label: 'BUND vs STOXX', w: 111, cls: 'w-[111px]' },
    { label: 'FIB Frame bassi', w: 112, cls: 'w-[112px]' },
    { label: 'FIB Giornaliero', w: 105, cls: 'w-[105px]' },
    { label: 'STOXX frame bassi', w: 127, cls: 'w-[127px]' },
    { label: 'STOXX giornaliero', w: 124, cls: 'w-[124px]' },
    { label: 'ANNUALE Indici', w: 110, cls: 'w-[110px]' },
    { label: 'No PREZZI', w: 81, cls: 'w-[81px]' },
    { label: 'SITO Indici', w: 86, cls: 'w-[86px]', active: true },
];

const Tab = ({ t }: { t: (typeof tabs)[number] }) => (
    <div className={`relative h-[17px] ${t.cls} flex items-center justify-center pl-[2px] ${t.active ? 'font-bold' : ''}`}>
        <svg width={t.w + 2} height={17} viewBox={`0 0 ${t.w + 2} 17`} className="absolute left-0 top-0">
            <path d={`M0 0L5 16H${t.w - 3}L${t.w} 0`} fill={t.active ? '#fff' : '#f2f2f2'} stroke="#111" strokeWidth={1} />
        </svg>
        <span className="relative text-[11.8px] leading-none text-[#1a1a1a] whitespace-nowrap">{t.label}</span>
    </div>
);

const TabBar = () => (
    <div className="h-[18px] bg-[#f4f4f4] border-t border-[#222] flex font-['Liberation_Sans',Arial,sans-serif]">
        <div className="w-[72px] flex pt-[1px] pl-px">
            {['M5 1v10M9 1L5 6l4 5', 'M9 1L5 6l4 5', 'M5 1l4 5-4 5', 'M5 1l4 5-4 5M9 1v10'].map((d, i) => (
                <div key={i} className="w-[17px] h-[15px] bg-[#e0e0e0] border border-[#b0b0b0] flex items-center justify-center">
                    <svg width={13} height={12} viewBox="0 0 13 12" fill="none" stroke="#777"><path d={d} /></svg>
                </div>
            ))}
        </div>
        {tabs.map((t) => <Tab key={t.label} t={t} />)}
    </div>
);

const StatusCell = ({ cls, children }: { cls: string; children: React.ReactNode }) => (
    <div className={`${cls} h-full border-l border-[#d0d0d0] pl-[4px] pt-[2px] flex items-center whitespace-nowrap`}>{children}</div>
);

const StatusBar = () => (
    <div className="h-[20px] bg-[#f0f0f0] flex text-[14px] leading-none text-[#222] font-['Liberation_Sans',Arial,sans-serif]">
        <div className="w-[1144px] flex items-center justify-between pl-[2px] pr-[16px] pt-[2px]">
            <span>For Help, press F1</span>
            <span>Acct:</span>
        </div>
        <StatusCell cls="w-[90px]">Open Psns:</StatusCell>
        <StatusCell cls="w-[63px]">DT BP:</StatusCell>
        <StatusCell cls="w-[87px]">Purch Pwr:</StatusCell>
        <StatusCell cls="w-[93px]">Closed P/L:</StatusCell>
        <StatusCell cls="w-[60px]">RT TE:</StatusCell>
        <StatusCell cls="w-[84px]">Open P/L:</StatusCell>
        <StatusCell cls="w-[89px] text-[#158015]">ORDER BAR</StatusCell>
        <StatusCell cls="w-[69px] text-[#158015]">MACROS</StatusCell>
        <div className="w-[17px] h-full flex items-start justify-center pt-[1px]">
            <svg width={13} height={13} viewBox="0 0 13 13">
                <circle cx={6.5} cy={6.5} r={5.5} fill="#d01010" />
                <circle cx={5} cy={4.5} r={1.5} fill="#ffc0c0" />
            </svg>
        </div>
        <StatusCell cls="flex-1 text-[14.5px]">25/02/2022 09:59</StatusCell>
    </div>
);

const ScrollBar = () => (
    <div className="h-[22px] bg-[#f0f0f0] flex items-center">
        <svg width={8} height={12} viewBox="0 0 8 12" className="ml-[7px]"><path d="M6 1L1 6l5 5z" fill="#707070" /></svg>
        <div className="ml-auto w-[18px] h-[19px] bg-[linear-gradient(#f4f4f4,#d8d8d8)] border border-[#a0a0a0] rounded-[2px] flex items-center justify-center gap-[1px]">
            <div className="w-px h-[9px] bg-[#555]" />
            <div className="w-px h-[9px] bg-[#555]" />
            <div className="w-px h-[9px] bg-[#555]" />
        </div>
        <svg width={8} height={12} viewBox="0 0 8 12" className="ml-[8px] mr-[7px]"><path d="M2 1l5 5-5 5z" fill="#707070" /></svg>
    </div>
);

export default function App() {
    return (
        <div className="w-[1920px] h-[1080px] overflow-hidden flex flex-col bg-[#f0f0f0]">
            <TitleBar />
            <MenuBar />
            <Toolbar />
            <div className="relative h-[929px] shrink-0">
                <ChartPlot />
                <MdiBtns cls="absolute right-[-8px] top-[8px] h-[26px]" />
            </div>
            <ScrollBar />
            <TabBar />
            <StatusBar />
            <div className="flex-1 bg-[#a8c0d8]" />
        </div>
    );
}
